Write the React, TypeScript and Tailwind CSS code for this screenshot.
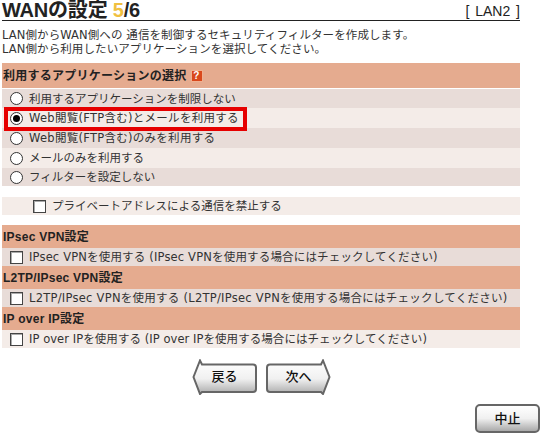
const font = { fontFamily: '"Liberation Sans", "Noto Sans CJK JP", sans-serif' };
const bodyFont = { fontFamily: '"DejaVu Sans", "Noto Sans CJK JP", sans-serif' };

function Radio({ checked }: { checked?: boolean }) {
  return (
    <span className="w-[13px] h-[13px] rounded-full border-[1.5px] border-[#333] bg-white flex items-center justify-center shrink-0">
      {checked && <span className="w-[7px] h-[7px] rounded-full bg-black" />}
    </span>
  );
}

function Check() {
  return <span className="w-[13px] h-[13px] border border-[#444] bg-white shrink-0 shadow-[inset_1px_1px_0_#aaa]" />;
}

function Head({ children, h }: { children: React.ReactNode; h: string }) {
  return (
    <div className={`${h} bg-[#e5ab8f] flex items-center pl-[1px] text-[12px] font-bold text-[#222] tracking-[0.25px]`}>{children}</div>
  );
}

function Row({ children, h, bg, pl }: { children: React.ReactNode; h: string; bg: string; pl: string }) {
  return (
    <div className={`${h} ${bg} ${pl} flex items-center gap-[6px] text-[11.5px] text-[#333] whitespace-nowrap`} style={bodyFont}>
      {children}
    </div>
  );
}

function NavButton({ label, dir }: { label: string; dir: "left" | "right" }) {
  const d =
    dir === "left"
      ? "M1.5 18 L8 1.5 L10 5.5 H61 Q64 5.5 64 8.5 V30 Q64 33 61 33 H10 L8 35 Z"
      : "M63.5 18 L57 1.5 L55 5.5 H4 Q1 5.5 1 8.5 V30 Q1 33 4 33 H55 L57 35 Z";
  const id = dir === "left" ? "gl" : "gr";
  return (
    <div className="relative w-[65px] h-[36px] flex items-center justify-center">
      <svg width="65" height="36" viewBox="0 0 65 36" className="absolute inset-0">
        <defs>
          <linearGradient id={id} x1="0" y1="0" x2="0" y2="1">
            <stop offset="0" stopColor="#ffffff" />
            <stop offset="0.55" stopColor="#f0f0f0" />
            <stop offset="1" stopColor="#aaaaaa" />
          </linearGradient>
        </defs>
        <path d={d} fill={`url(#${id})`} stroke="#666" strokeWidth="2" />
      </svg>
      <span className="relative text-[13px] font-medium text-[#111]">{label}</span>
    </div>
  );
}

export default function App() {
  return (
    <div className="w-[542px] h-[434px] bg-white relative overflow-hidden" style={font}>
      <div className="ml-[2px] w-[518px]">
        <div className="h-[21px] border-b-[1.5px] border-[#222] flex items-end justify-between">
          <div className="text-[20px] leading-[20px] font-bold text-[#222] tracking-[-0.2px]">
            WANの設定 <span className="text-[#f0c040]">5</span>/6
          </div>
          <div className="text-[14px] leading-[18px] text-[#222] [word-spacing:2px]">[ LAN2 ]</div>
        </div>
        <div className="mt-[7px] h-[35px] text-[11.5px] leading-[14px] text-[#333] whitespace-nowrap tracking-[0.1px]" style={bodyFont}>
          <div>LAN側からWAN側への 通信を制御するセキュリティフィルターを作成します。</div>
          <div>LAN側から利用したいアプリケーションを選択してください。</div>
        </div>
        <Head h="h-[25px]">
          <span>利用するアプリケーションの選択</span>
          <span className="ml-[4px] w-[12px] h-[12px] bg-[#d9481c] border border-[#f0b090] text-white text-[10px] leading-[10px] flex items-center justify-center">?</span>
        </Head>
        <div className="h-[1px]" />
        <Row h="h-[19px]" bg="bg-[#e8dcd8]" pl="pl-[8px]"><Radio /><span className="pt-[2px]">利用するアプリケーションを制限しない</span></Row>
        <Row h="h-[20px]" bg="bg-[#f4ece8]" pl="pl-[8px]"><Radio checked /><span className="pt-[2px] tracking-[0.28px]">Web閲覧(FTP含む)とメールを利用する</span></Row>
        <Row h="h-[20px]" bg="bg-[#e8dcd8]" pl="pl-[8px]"><Radio /><span className="pt-[2px] tracking-[0.28px]">Web閲覧(FTP含む)のみを利用する</span></Row>
        <Row h="h-[20px]" bg="bg-[#f4ece8]" pl="pl-[8px]"><Radio /><span className="pt-[2px]">メールのみを利用する</span></Row>
        <Row h="h-[18px]" bg="bg-[#e8dcd8]" pl="pl-[8px]"><Radio /><span className="pt-[2px]">フィルターを設定しない</span></Row>
        <div className="h-[11px]" />
        <Row h="h-[18px]" bg="bg-[#f4ece8]" pl="pl-[31px]"><Check /><span className="pt-[2px]">プライベートアドレスによる通信を禁止する</span></Row>
        <div className="h-[10px]" />
        <Head h="h-[23px]">IPsec VPN設定</Head>
        <Row h="h-[18px]" bg="bg-[#e8dcd8]" pl="pl-[8px]"><Check /><span className="pt-[2px] tracking-[0.17px]">IPsec VPNを使用する (IPsec VPNを使用する場合にはチェックしてください)</span></Row>
        <Head h="h-[23px]">L2TP/IPsec VPN設定</Head>
        <Row h="h-[18px]" bg="bg-[#e8dcd8]" pl="pl-[8px]"><Check /><span className="pt-[2px] tracking-[0.26px]">L2TP/IPsec VPNを使用する (L2TP/IPsec VPNを使用する場合にはチェックしてください)</span></Row>
        <Head h="h-[23px]">IP over IP設定</Head>
        <Row h="h-[18px]" bg="bg-[#f4ece8]" pl="pl-[8px]"><Check /><span className="pt-[2px] tracking-[0.06px]">IP over IPを使用する (IP over IPを使用する場合にはチェックしてください)</span></Row>
        <div className="mt-[11px] flex gap-[9px] ml-[190px]">
          <NavButton label="戻る" dir="left" />
          <NavButton label="次へ" dir="right" />
        </div>
        <div className="mt-[9px] flex justify-end">
          <div className="w-[65px] h-[29px] rounded-[5px] border-2 border-[#666] bg-gradient-to-b from-white via-[#f0f0f0] to-[#aaaaaa] flex items-center justify-center text-[13px] font-medium text-[#111] -mr-[20px]">
            中止
          </div>
        </div>
      </div>
      <div className="absolute left-[4px] top-[107px] w-[243px] h-[24px] border-[4px] border-[#e60000]" />
    </div>
  );
}
